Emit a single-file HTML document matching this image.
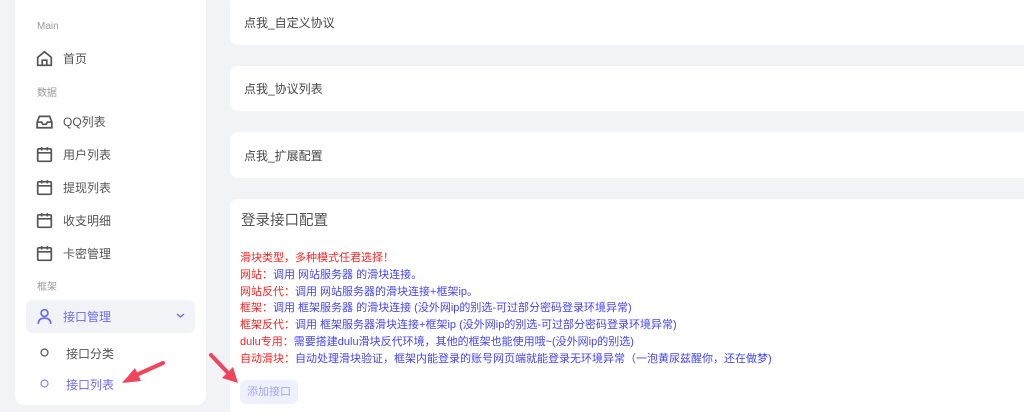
<!DOCTYPE html>
<html><head><meta charset="utf-8"><style>
*{margin:0;padding:0;box-sizing:border-box}
html,body{width:1024px;height:412px;overflow:hidden}
body{background:#f2f3f7;font-family:"Liberation Sans","Noto Sans CJK SC",sans-serif;position:relative;color:#555}
.side{position:absolute;left:15px;top:-10px;width:191px;height:415px;background:#fff;border-radius:10px}
.abs{position:absolute}
.lab{font-size:10px;color:#999;left:37px}
.it{left:63px;font-size:12px;color:#555}
.ic{position:absolute;left:36px}
.card{position:absolute;left:230px;width:810px;background:#fff;border-radius:8px}
.ct{position:absolute;left:14px;font-size:12px;color:#444}
.ln{position:absolute;left:240px;font-size:11px;color:#44f;white-space:nowrap}
.ln b{font-weight:normal;color:#f22}
</style></head><body>
<div class="side"></div>
<div class="abs lab" style="top:21px">Main</div>
<svg class="ic" style="top:50px" width="17" height="17" viewBox="0 0 15 15" fill="none" stroke="#555" stroke-width="1.5"><path d="M1.5 6.5L7.5 1.5L13.5 6.5V13.5H1.5Z"/><path d="M5.5 13.5V9H9.5V13.5"/></svg>
<div class="abs it" style="top:50px">首页</div>
<div class="abs lab" style="top:84px">数据</div>
<svg class="ic" style="top:113px" width="17" height="17" viewBox="0 0 15 15" fill="none" stroke="#555" stroke-width="1.5"><path d="M1 8L3 3H12L14 8V13H1Z"/><path d="M1 8H5L6 10H9L10 8H14"/></svg>
<div class="abs it" style="top:113px">QQ列表</div>
<svg class="ic" style="top:146px" width="17" height="17" viewBox="0 0 15 15" fill="none" stroke="#555" stroke-width="1.5"><rect x="1.5" y="2.5" width="12" height="11" rx="1"/><path d="M1.5 6H13.5M5 1V4M10 1V4"/></svg>
<div class="abs it" style="top:146px">用户列表</div>
<svg class="ic" style="top:179px" width="17" height="17" viewBox="0 0 15 15" fill="none" stroke="#555" stroke-width="1.5"><rect x="1.5" y="2.5" width="12" height="11" rx="1"/><path d="M1.5 6H13.5M5 1V4M10 1V4"/></svg>
<div class="abs it" style="top:179px">提现列表</div>
<svg class="ic" style="top:212px" width="17" height="17" viewBox="0 0 15 15" fill="none" stroke="#555" stroke-width="1.5"><rect x="1.5" y="2.5" width="12" height="11" rx="1"/><path d="M1.5 6H13.5M5 1V4M10 1V4"/></svg>
<div class="abs it" style="top:212px">收支明细</div>
<svg class="ic" style="top:245px" width="17" height="17" viewBox="0 0 15 15" fill="none" stroke="#555" stroke-width="1.5"><rect x="1.5" y="2.5" width="12" height="11" rx="1"/><path d="M1.5 6H13.5M5 1V4M10 1V4"/></svg>
<div class="abs it" style="top:245px">卡密管理</div>
<div class="abs lab" style="top:278px">框架</div>
<div class="abs" style="left:26px;top:300px;width:169px;height:33px;background:#f2f3f7;border-radius:7px"></div>
<svg class="ic" style="top:308px" width="17" height="17" viewBox="0 0 15 15" fill="none" stroke="#6b6bf5" stroke-width="1.5"><circle cx="7.5" cy="4.5" r="3"/><path d="M2 14C2 10 4.5 9 7.5 9S13 10 13 14"/></svg>
<div class="abs it" style="top:308px;color:#6b6bf5">接口管理</div>
<svg class="abs" style="left:176px;top:312px" width="9" height="7" viewBox="0 0 9 7" fill="none" stroke="#6b6bf5" stroke-width="1.4"><path d="M1 2L4.5 5L8 2"/></svg>
<svg class="abs" style="left:40px;top:348px" width="9" height="9"><circle cx="4.5" cy="4.5" r="3.5" fill="none" stroke="#555" stroke-width="1.2"/></svg>
<div class="abs" style="left:66px;top:345px;font-size:12px;color:#555">接口分类</div>
<svg class="abs" style="left:40px;top:379px" width="9" height="9"><circle cx="4.5" cy="4.5" r="3.5" fill="none" stroke="#8a8af7" stroke-width="1.2"/></svg>
<div class="abs" style="left:66px;top:376px;font-size:12px;color:#6b6bf5">接口列表</div>

<div class="card" style="top:-5px;height:50px"><div class="ct" style="top:19px">点我_自定义协议</div></div>
<div class="card" style="top:66px;height:45px"><div class="ct" style="top:14px">点我_协议列表</div></div>
<div class="card" style="top:132px;height:46px"><div class="ct" style="top:15px">点我_扩展配置</div></div>
<div class="card" style="top:199px;height:230px"><div class="ct" style="top:10px;left:11px;font-size:14.5px;color:#555">登录接口配置</div></div>
<div class="ln" style="top:249px"><b>滑块类型，多种模式任君选择！</b></div>
<div class="ln" style="top:266px"><b>网站：</b>调用 网站服务器 的滑块连接。</div>
<div class="ln" style="top:283px"><b>网站反代：</b>调用 网站服务器的滑块连接+框架ip。</div>
<div class="ln" style="top:299px"><b>框架：</b>调用 框架服务器 的滑块连接 (没外网ip的别选-可过部分密码登录环境异常)</div>
<div class="ln" style="top:316px"><b>框架反代：</b>调用 框架服务器滑块连接+框架ip (没外网ip的别选-可过部分密码登录环境异常)</div>
<div class="ln" style="top:333px"><b>dulu专用：</b>需要搭建dulu滑块反代环境，其他的框架也能使用哦~(没外网ip的别选)</div>
<div class="ln" style="top:350px"><b>自动滑块：</b>自动处理滑块验证，框架内能登录的账号网页端就能登录无环境异常（一泡黄尿兹醒你，还在做梦)</div>
<div class="abs" style="left:240px;top:380px;width:58px;height:24px;background:#eef0fd;border-radius:6px;font-size:11px;color:#a5a8f0;text-align:center;line-height:24px">添加接口</div>

<svg class="abs" style="left:0;top:0" width="1024" height="412">
<path d="M163 363L134 376" stroke="#f0455a" stroke-width="4" stroke-linecap="round"/>
<path d="M122 383L135 368L141 381Z" fill="#f0455a"/>
<path d="M211 355L229 374" stroke="#f0455a" stroke-width="4" stroke-linecap="round"/>
<path d="M238 383L222 378L233 367Z" fill="#f0455a"/>
</svg>
</body></html>
